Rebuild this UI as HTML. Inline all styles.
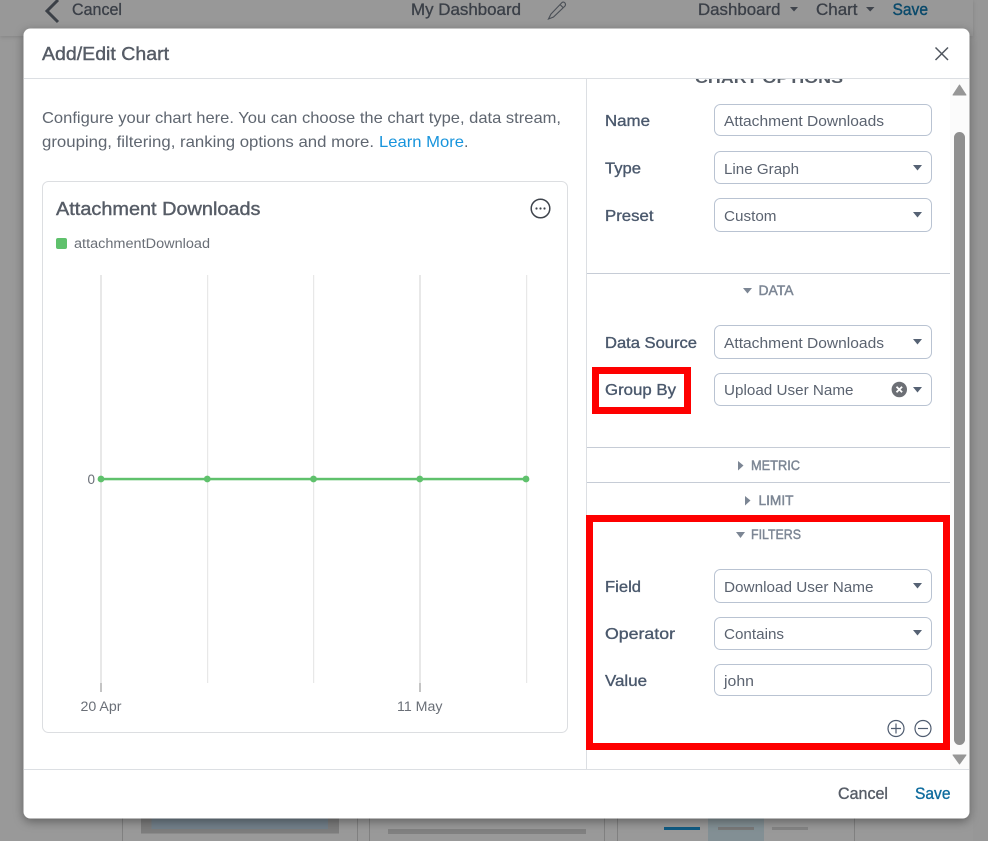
<!DOCTYPE html>
<html><head><meta charset="utf-8">
<style>
html,body{margin:0;padding:0;width:988px;height:841px;overflow:hidden;background:#999}
svg{position:absolute;left:0;top:0;display:block}
text{font-family:"Liberation Sans",sans-serif}
.lb{font-size:16px;fill:#4a586c;stroke:#4a586c;stroke-width:.35}
.v{font-size:15px;fill:#5b6370}
.sec{font-size:13.5px;fill:#7c8694;stroke:#7c8694;stroke-width:.45}
.box{fill:#fff;stroke:#b9c3d2;stroke-width:1}
.car{fill:#566274}
.d{font-size:16px;fill:#5f6670}
.hd{font-size:16.5px;fill:#3a3f47;stroke:#3a3f47;stroke-width:.3}
</style></head><body>
<svg width="988" height="841" viewBox="0 0 988 841" xmlns="http://www.w3.org/2000/svg">
<defs>
<filter id="sh" x="-5%" y="-5%" width="110%" height="110%"><feDropShadow dx="0" dy="3" stdDeviation="5" flood-color="#000" flood-opacity=".38"/></filter>
<filter id="sh2" x="-5%" y="-50%" width="110%" height="200%"><feDropShadow dx="0" dy="1" stdDeviation="2" flood-color="#000" flood-opacity=".14"/></filter>
<clipPath id="pc"><rect x="587" y="79" width="363" height="30"/></clipPath>
</defs>
<rect width="988" height="841" fill="#999"/>
<rect x="973" y="0" width="15" height="841" fill="#979797"/>
<rect x="0" y="0" width="973" height="36" fill="#989898" filter="url(#sh2)"/>

<!-- top bar -->
<path d="M58 0 L47 11 L58 22" fill="none" stroke="#3b4047" stroke-width="3"/>
<text class="hd" x="72" y="15" textLength="50" lengthAdjust="spacingAndGlyphs">Cancel</text>
<text class="hd" x="411" y="15" textLength="110" lengthAdjust="spacingAndGlyphs">My Dashboard</text>
<path d="M551 14 L562 2.5 Q563.500 1.500 565 3 Q566 4.500 565 6 L553.500 17 L548.500 19 Z M560 4.500 L563.500 8" fill="none" stroke="#4a4f56" stroke-width="1.100"/>
<text class="hd" x="698" y="15" textLength="82.500" lengthAdjust="spacingAndGlyphs">Dashboard</text>
<path d="M790 7 H798 L794 11.500 Z" fill="#3f444c"/>
<text class="hd" x="816" y="15" textLength="41.500" lengthAdjust="spacingAndGlyphs">Chart</text>
<path d="M866 7 H874.500 L870.200 11.500 Z" fill="#3f444c"/>
<text x="892.500" y="15" font-size="16.500" fill="#0a4a6b" stroke="#0a4a6b" stroke-width=".4" textLength="35.500" lengthAdjust="spacingAndGlyphs">Save</text>

<!-- background under modal -->
<g fill="none">
<rect x="122" y="812" width="1" height="29" fill="#808080"/>
<rect x="357" y="812" width="1" height="29" fill="#808080"/>
<rect x="369" y="812" width="1" height="29" fill="#808080"/>
<rect x="604" y="812" width="1" height="29" fill="#808080"/>
<rect x="617" y="812" width="1" height="29" fill="#808080"/>
<rect x="854" y="812" width="1" height="29" fill="#808080"/>
<rect x="141" y="812" width="198" height="21.500" fill="#7c7c7c"/>
<rect x="151.500" y="812" width="176.500" height="17" fill="#72808a"/>
<rect x="388" y="829" width="198" height="5" fill="#808080"/>
<rect x="708" y="812" width="56" height="29" fill="#828f94"/>
<rect x="664" y="827" width="36" height="3" fill="#0f5a82"/>
<rect x="718" y="827" width="36" height="3" fill="#787878"/>
<rect x="772" y="827" width="36" height="3" fill="#838383"/>
</g>

<!-- modal -->
<rect x="23.500" y="28.500" width="946" height="790" rx="7" fill="#fff" filter="url(#sh)"/>
<text x="42" y="60" font-size="18" fill="#565c66" stroke="#565c66" stroke-width=".4" textLength="127" lengthAdjust="spacingAndGlyphs">Add/Edit Chart</text>
<path d="M935.500 47.500 L948 60 M948 47.500 L935.500 60" stroke="#50565f" stroke-width="1.500" fill="none"/>
<rect x="24" y="78" width="945" height="1" fill="#dcdfe3"/>
<rect x="24" y="769" width="945" height="1" fill="#dcdfe3"/>
<rect x="586" y="79" width="1" height="690" fill="#dcdfe3"/>

<!-- left -->
<text class="d" x="42" y="123" textLength="519" lengthAdjust="spacingAndGlyphs">Configure your chart here. You can choose the chart type, data stream,</text>
<text class="d" x="42" y="147" textLength="332" lengthAdjust="spacingAndGlyphs">grouping, filtering, ranking options and more.</text>
<text x="379" y="147" font-size="16" fill="#1794dc" textLength="85" lengthAdjust="spacingAndGlyphs">Learn More</text>
<text class="d" x="464" y="147">.</text>

<rect x="42.500" y="181.500" width="525" height="551" rx="6" fill="#fff" stroke="#dcdee1"/>
<text x="56" y="215" font-size="18.500" fill="#565c66" stroke="#565c66" stroke-width=".4" textLength="204.500" lengthAdjust="spacingAndGlyphs">Attachment Downloads</text>
<circle cx="540.500" cy="208.500" r="9.300" fill="none" stroke="#3f444c" stroke-width="1.500"/>
<circle cx="536.500" cy="208.500" r="1.100" fill="#3f444c"/><circle cx="540.500" cy="208.500" r="1.100" fill="#3f444c"/><circle cx="544.500" cy="208.500" r="1.100" fill="#3f444c"/>
<rect x="56" y="238" width="11" height="11" rx="2" fill="#5fc16c"/>
<text x="74" y="248" font-size="13.500" fill="#6a6f77" textLength="136" lengthAdjust="spacingAndGlyphs">attachmentDownload</text>

<g fill="#e8e8e8">
<rect x="100" y="275" width="2" height="408"/><rect x="207" y="275" width="1.200" height="408"/><rect x="313" y="275" width="1.200" height="408"/><rect x="419" y="275" width="2" height="408"/><rect x="526" y="275" width="1.200" height="408"/>
</g>
<rect x="100.500" y="683" width="1" height="9" fill="#8a8a8a"/>
<rect x="419.500" y="683" width="1" height="9" fill="#8a8a8a"/>
<text x="87.500" y="484" font-size="13.500" fill="#6a6f77" textLength="7.500" lengthAdjust="spacingAndGlyphs">0</text>
<rect x="101" y="477.800" width="425" height="2.500" fill="#5fc16c"/>
<g fill="#5fc16c"><circle cx="101" cy="479" r="3.400"/><circle cx="207.300" cy="479" r="3.400"/><circle cx="313.500" cy="479" r="3.400"/><circle cx="419.800" cy="479" r="3.400"/><circle cx="526" cy="479" r="3.400"/></g>
<text x="80.500" y="711" font-size="13.500" fill="#6a6f77" textLength="41" lengthAdjust="spacingAndGlyphs">20 Apr</text>
<text x="397" y="711" font-size="13.500" fill="#6a6f77" textLength="45.500" lengthAdjust="spacingAndGlyphs">11 May</text>

<!-- right panel -->
<text clip-path="url(#pc)" x="695" y="83" font-size="15" font-weight="bold" fill="#555c66" textLength="148" lengthAdjust="spacingAndGlyphs">CHART OPTIONS</text>
<rect x="950" y="79" width="19" height="690" fill="#fbfbfb"/>
<rect x="954" y="132" width="11" height="613" rx="5.500" fill="#8f8f8f"/>
<path d="M959.500 85 L966 95 H953 Z" fill="#969696" stroke="#969696" stroke-linejoin="round"/>
<path d="M953 755 H966 L959.500 764 Z" fill="#969696" stroke="#969696" stroke-linejoin="round"/>

<text class="lb" x="605" y="126" textLength="45" lengthAdjust="spacingAndGlyphs">Name</text>
<rect class="box" x="714.500" y="104.500" width="217" height="31" rx="6"/>
<text class="v" x="724" y="126" textLength="160" lengthAdjust="spacingAndGlyphs">Attachment Downloads</text>

<text class="lb" x="605" y="173.500" textLength="36" lengthAdjust="spacingAndGlyphs">Type</text>
<rect class="box" x="714.500" y="151.500" width="217" height="32" rx="6"/>
<text class="v" x="724" y="174" textLength="75" lengthAdjust="spacingAndGlyphs">Line Graph</text>
<path class="car" d="M913 165 H922 L917.500 170.500 Z"/>

<text class="lb" x="605" y="221" textLength="48.500" lengthAdjust="spacingAndGlyphs">Preset</text>
<rect class="box" x="714.500" y="198.500" width="217" height="33" rx="6"/>
<text class="v" x="724" y="221" textLength="52.500" lengthAdjust="spacingAndGlyphs">Custom</text>
<path class="car" d="M913 212 H922 L917.500 217.500 Z"/>

<rect x="587" y="273" width="363" height="1" fill="#c6ccd6"/>
<path d="M743 288 H752 L747.500 293.500 Z" fill="#7c8694"/>
<text class="sec" x="758.500" y="295" textLength="35" lengthAdjust="spacingAndGlyphs">DATA</text>

<text class="lb" x="605" y="348" textLength="92" lengthAdjust="spacingAndGlyphs">Data Source</text>
<rect class="box" x="714.500" y="325.500" width="217" height="33" rx="6"/>
<text class="v" x="724" y="348" textLength="160" lengthAdjust="spacingAndGlyphs">Attachment Downloads</text>
<path class="car" d="M913 339 H922 L917.500 344.500 Z"/>

<text class="lb" x="605" y="395" textLength="71" lengthAdjust="spacingAndGlyphs">Group By</text>
<rect class="box" x="714.500" y="373.500" width="217" height="32" rx="6"/>
<text class="v" x="724" y="395" textLength="129.500" lengthAdjust="spacingAndGlyphs">Upload User Name</text>
<circle cx="899.300" cy="389.500" r="7.700" fill="#6c6f75"/>
<path d="M896.500 386.700 L902.100 392.300 M902.100 386.700 L896.500 392.300" stroke="#fff" stroke-width="1.800" fill="none"/>
<path class="car" d="M913 387 H922 L917.500 392.500 Z"/>

<path fill="#fe0000" fill-rule="evenodd" d="M592 367 H691 V414 H592 Z M599 374 V407 H684 V374 Z"/>

<rect x="587" y="447" width="363" height="1" fill="#c6ccd6"/>
<path d="M738 461 L743.500 465.500 L738 470.500 Z" fill="#7c8694"/>
<text class="sec" x="751" y="470" textLength="49" lengthAdjust="spacingAndGlyphs">METRIC</text>
<rect x="587" y="482" width="363" height="1" fill="#c6ccd6"/>
<path d="M745 496 L750.500 500.500 L745 505.500 Z" fill="#7c8694"/>
<text class="sec" x="758.500" y="505" textLength="35" lengthAdjust="spacingAndGlyphs">LIMIT</text>

<path d="M736 532 H745 L740.500 538 Z" fill="#7c8694"/>
<text class="sec" x="751" y="539" textLength="50" lengthAdjust="spacingAndGlyphs">FILTERS</text>

<text class="lb" x="605" y="592" textLength="36" lengthAdjust="spacingAndGlyphs">Field</text>
<rect class="box" x="714.500" y="569.500" width="217" height="33" rx="6"/>
<text class="v" x="724" y="592" textLength="149.500" lengthAdjust="spacingAndGlyphs">Download User Name</text>
<path class="car" d="M913 583 H922 L917.500 588.500 Z"/>

<text class="lb" x="605" y="639" textLength="70" lengthAdjust="spacingAndGlyphs">Operator</text>
<rect class="box" x="714.500" y="617.500" width="217" height="32" rx="6"/>
<text class="v" x="724" y="639" textLength="60" lengthAdjust="spacingAndGlyphs">Contains</text>
<path class="car" d="M913 630 H922 L917.500 635.500 Z"/>

<text class="lb" x="605" y="686" textLength="42" lengthAdjust="spacingAndGlyphs">Value</text>
<rect class="box" x="714.500" y="664.500" width="217" height="31" rx="6"/>
<text class="v" x="724" y="686" textLength="30" lengthAdjust="spacingAndGlyphs">john</text>

<circle cx="896" cy="728.500" r="8" fill="none" stroke="#4f5c70" stroke-width="1.200"/>
<path d="M891 728.500 H901 M896 723.500 V733.500" stroke="#4f5c70" stroke-width="1.200" fill="none"/>
<circle cx="923" cy="728.500" r="8" fill="none" stroke="#4f5c70" stroke-width="1.200"/>
<path d="M918 728.500 H928" stroke="#4f5c70" stroke-width="1.200" fill="none"/>

<path fill="#fe0000" fill-rule="evenodd" d="M586 515 H950 V750 H586 Z M593 522 V743 H943 V522 Z"/>

<!-- footer -->
<text x="838" y="799" font-size="16.500" fill="#565c66" stroke="#565c66" stroke-width=".35" textLength="50" lengthAdjust="spacingAndGlyphs">Cancel</text>
<text x="915" y="799" font-size="16.500" fill="#0f6c9e" stroke="#0f6c9e" stroke-width=".35" textLength="35.500" lengthAdjust="spacingAndGlyphs">Save</text>
</svg>
</body></html>
